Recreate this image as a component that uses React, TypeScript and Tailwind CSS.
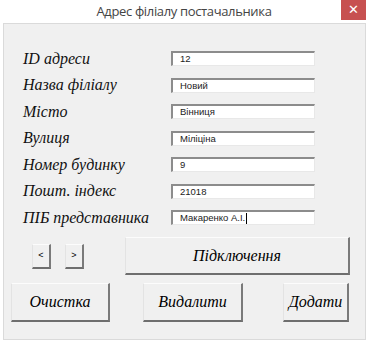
const rows: [string, string][] = [
  ['ID адреси', '12'],
  ['Назва філіалу', 'Новий'],
  ['Місто', 'Вінниця'],
  ['Вулиця', 'Міліціна'],
  ['Номер будинку', '9'],
  ['Пошт. індекс', '21018'],
  ['ПІБ представника', 'Макаренко А.І.'],
];

const serif = "font-['Liberation_Serif',serif] italic";
const btn =
  'flex items-center justify-center bg-[#f0f0f0] text-black border-t border-l border-t-[#fcfcfc] border-l-[#e3e3e3] border-r-2 border-b-2 border-r-[#7a7a7a] border-b-[#6e6e6e]';

const App = () => {
  return (
    <div className="w-[371px] h-[344px] bg-white relative overflow-hidden font-['Liberation_Sans',sans-serif]">
      {/* title bar */}
      <div className="h-[23px] flex items-center justify-center pr-[3px]">
        <span className="text-[13px] text-[#444] font-['Open_Sans',sans-serif] tracking-[-0.35px]">
          Адрес філіалу постачальника
        </span>
      </div>
      <div className="absolute top-0 right-[5px] w-[25px] h-[20px] bg-[#c75050] flex items-center justify-center text-white text-[13px]">
        ✕
      </div>

      {/* body */}
      <div className="ml-[3px] w-[363px] h-[317px] bg-[#f0f0f0] border border-[#dadada] flex flex-col">
        <div className="pt-[27px] pl-[19px] flex flex-col gap-[11.5px]">
          {rows.map(([label, value], i) => (
            <div key={label} className="flex items-center h-[15px]">
              <span className={`${serif} w-[148px] text-[16px] leading-none text-[#111]`}>{label}</span>
              <div className="w-[144px] h-[15px] bg-white border-t-2 border-l-2 border-t-[#8c8c8c] border-l-[#8c8c8c] border-r border-b border-r-[#e8e8e8] border-b-[#e8e8e8] flex items-center pl-[7px]">
                <span className="text-[9.5px] leading-none text-[#222]">{value}</span>
                {i === rows.length - 1 && <span className="w-px h-[11px] bg-black ml-px" />}
              </div>
            </div>
          ))}
        </div>

        <div className="mt-[12px] flex items-center h-[38px]">
          <div className={`${btn} ml-[28px] w-[19px] h-[25px] text-[9px] font-['Liberation_Sans',sans-serif]`}>&lt;</div>
          <div className={`${btn} ml-[14px] w-[19px] h-[25px] text-[9px] font-['Liberation_Sans',sans-serif]`}>&gt;</div>
          <div className={`${btn} ${serif} ml-[41px] w-[225px] h-[38px] text-[16px]`}>Підключення</div>
        </div>

        <div className="mt-[8px] flex items-center h-[39px]">
          <div className={`${btn} ${serif} ml-[7px] w-[99px] h-[39px] text-[16px]`}>Очистка</div>
          <div className={`${btn} ${serif} ml-[33px] w-[100px] h-[39px] text-[16px]`}>Видалити</div>
          <div className={`${btn} ${serif} ml-[40px] w-[66px] h-[39px] text-[16px]`}>Додати</div>
        </div>
      </div>
    </div>
  );
};

export default App;
